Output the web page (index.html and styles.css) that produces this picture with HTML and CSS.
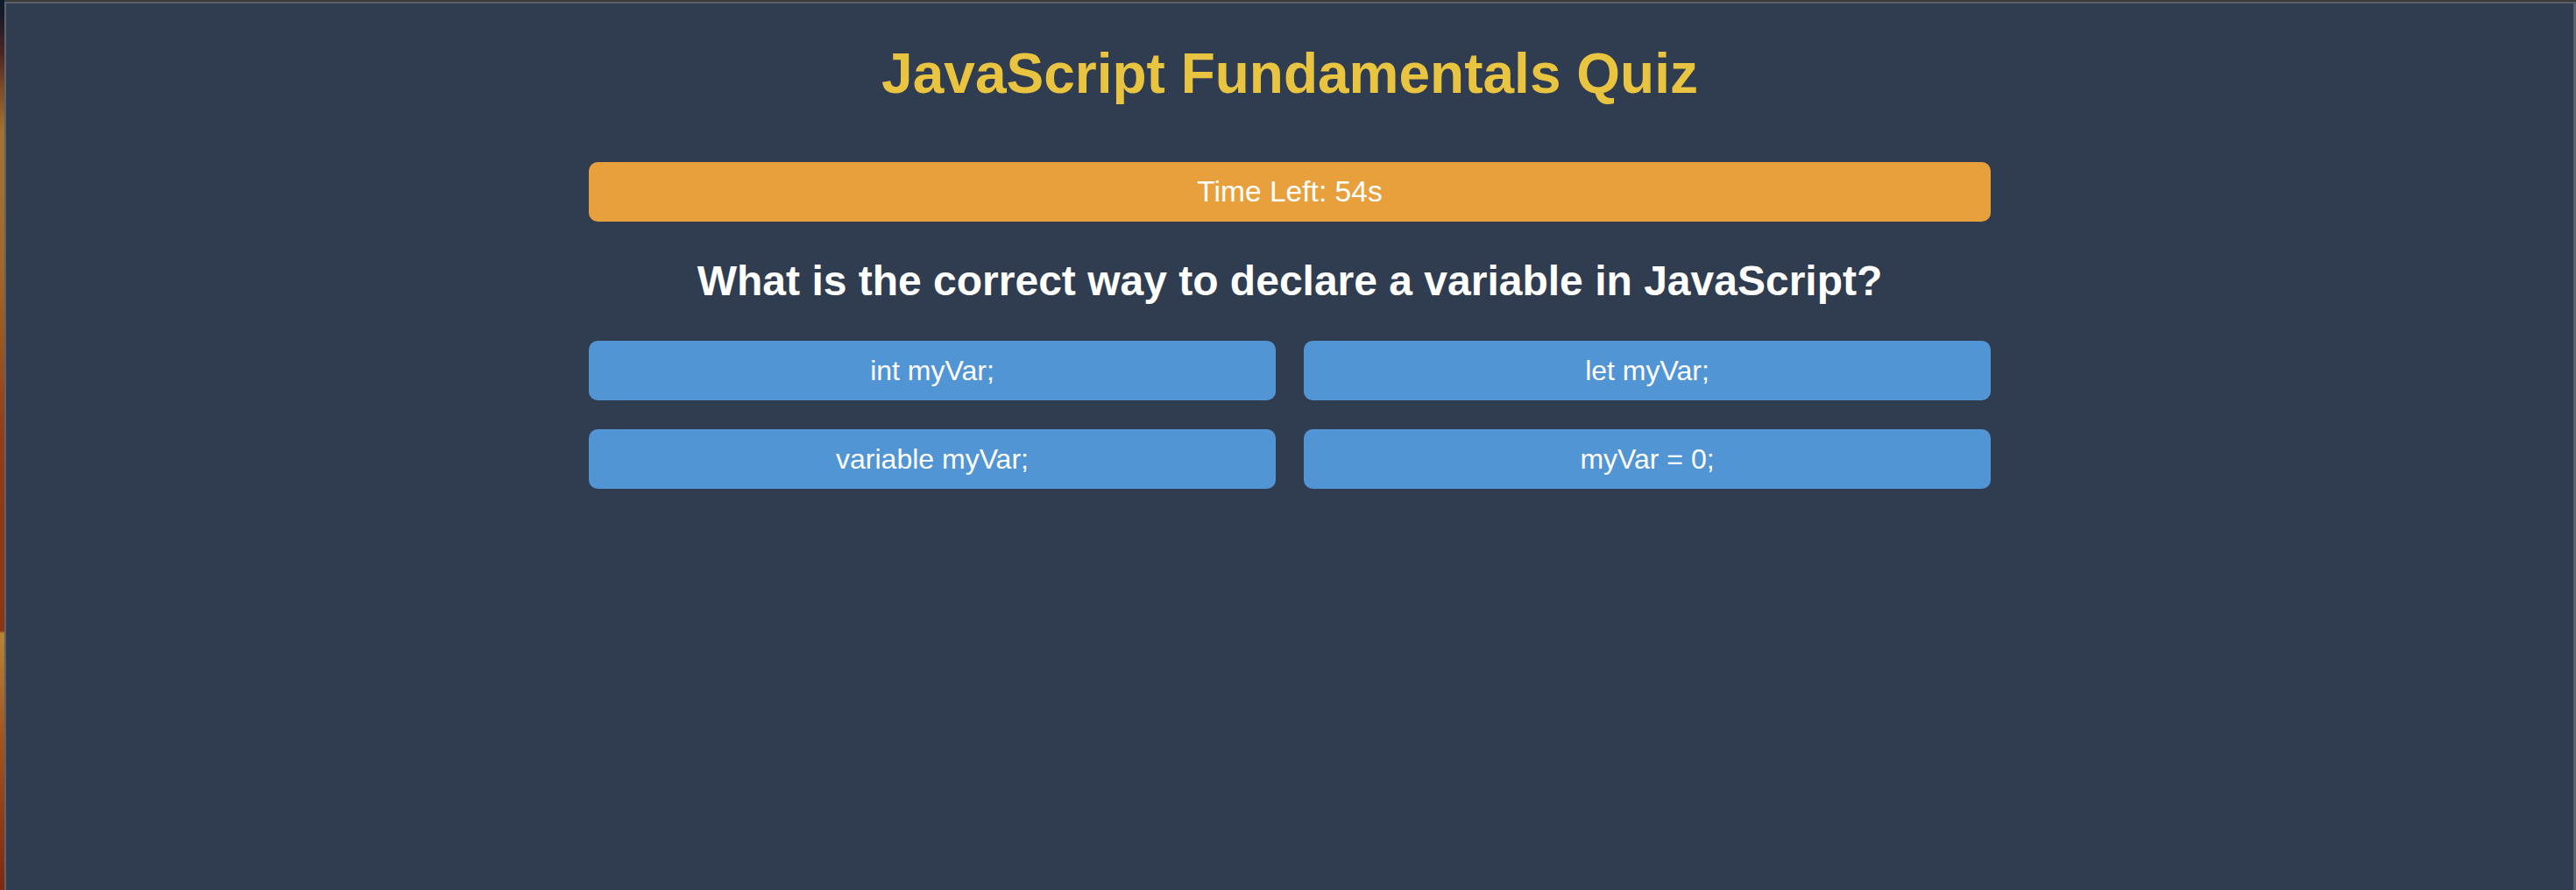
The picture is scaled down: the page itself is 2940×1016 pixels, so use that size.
FILE: index.html
```html
<!DOCTYPE html>
<html lang="en">
<head>
<meta charset="utf-8">
<title>JavaScript Fundamentals Quiz</title>
<link rel="stylesheet" href="styles.css">
</head>
<body>
<div class="window">
  <div class="window-inner">
    <main class="quiz">
      <h1 class="quiz-title">JavaScript Fundamentals Quiz</h1>
      <div class="timer">Time Left: 54s</div>
      <h2 class="question">What is the correct way to declare a variable in JavaScript?</h2>
      <div class="answers">
        <button class="answer">int myVar;</button>
        <button class="answer">let myVar;</button>
        <button class="answer">variable myVar;</button>
        <button class="answer">myVar = 0;</button>
      </div>
    </main>
  </div>
</div>
</body>
</html>
```

FILE: styles.css
```css
html, body {
  margin: 0;
  padding: 0;
  height: 100%;
}

body {
  background: linear-gradient(180deg,
    #0a1a2a 0px,
    #1a1a28 20px,
    #4a2525 60px,
    #7a4a2a 100px,
    #a07530 150px,
    #a06a28 300px,
    #903d1a 500px,
    #8a3515 720px,
    #b58535 723px,
    #a0521f 850px,
    #7a2a12 1016px);
  font-family: "Liberation Sans", Arial, sans-serif;
  overflow: hidden;
}

.window {
  margin-left: 5px;
  height: 100%;
  box-sizing: border-box;
  border-top: 2px solid #3b3b3b;
}

.window-inner {
  height: 100%;
  box-sizing: border-box;
  background: #303c4f;
  border-top: 2px solid #5a5f68;
  border-left: 2px solid #5b6270;
  border-right: 3px solid #5b6270;
}

.quiz {
  max-width: 1600px;
  margin: 0 auto;
  display: flex;
  flex-direction: column;
}

.quiz-title {
  margin: 43px 0 0;
  font-size: 64px;
  line-height: 74px;
  font-weight: 700;
  color: #e9c440;
  text-align: center;
}

.timer {
  margin-top: 64px;
  background: #e7a03c;
  color: #ffffff;
  border-radius: 10px;
  padding: 16px;
  font-size: 33.6px;
  line-height: 36px;
  text-align: center;
}

.question {
  margin: 40px 0 0;
  font-size: 48px;
  line-height: 55px;
  font-weight: 700;
  color: #ffffff;
  text-align: center;
}

.answers {
  margin-top: 41px;
  display: grid;
  grid-template-columns: 1fr 1fr;
  gap: 33px 32px;
}

.answer {
  font-family: "Liberation Sans", Arial, sans-serif;
  background: #5295d4;
  color: #ffffff;
  border: none;
  border-radius: 10px;
  padding: 16px;
  font-size: 32px;
  line-height: 36px;
  text-align: center;
  cursor: pointer;
}
```
